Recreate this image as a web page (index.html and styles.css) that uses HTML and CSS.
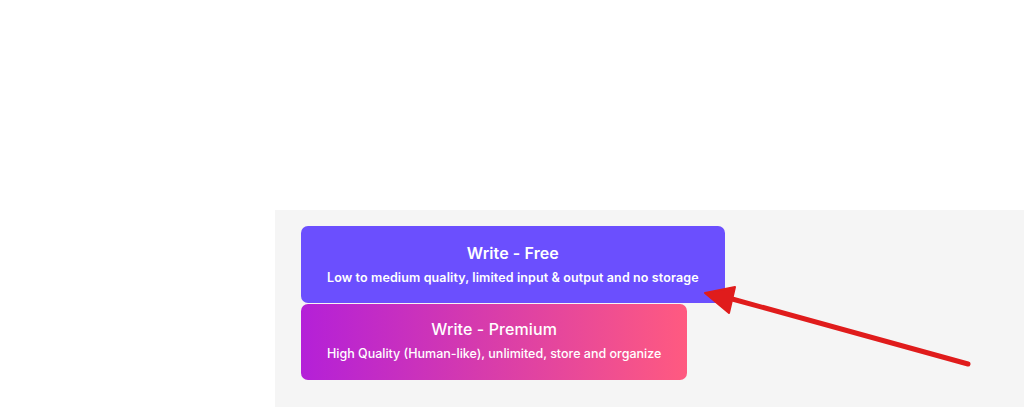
FILE: index.html
```html
<!DOCTYPE html>
<html lang="en">
<head>
<meta charset="utf-8">
<title>Write plans</title>
<link rel="stylesheet" href="styles.css">
</head>
<body>
<div class="page">
  <section class="panel">
    <div class="options">
      <button class="option option-free">
        <span class="option-title">Write - Free</span>
        <span class="option-desc">Low to medium quality, limited input &amp; output and no storage</span>
      </button>
      <button class="option option-premium">
        <span class="option-title">Write - Premium</span>
        <span class="option-desc">High Quality (Human-like), unlimited, store and organize</span>
      </button>
    </div>
  </section>
  <svg class="arrow" width="1024" height="407" viewBox="0 0 1024 407" aria-hidden="true">
    <line x1="968" y1="364" x2="725" y2="297" stroke="#e01c1c" stroke-width="5" stroke-linecap="round"/>
    <polygon points="705,293 735,287 729,313" fill="#e01c1c" stroke="#e01c1c" stroke-width="2" stroke-linejoin="round"/>
  </svg>
</div>
</body>
</html>
```

FILE: styles.css
```css
html, body {
  margin: 0;
  padding: 0;
  background: #ffffff;
  width: 1024px;
  height: 407px;
  overflow: hidden;
}

.page {
  position: relative;
  width: 1024px;
  height: 407px;
  padding-top: 210px;
  box-sizing: border-box;
}

.panel {
  margin-left: 275px;
  height: 197px;
  background: #f5f5f5;
  padding: 16px 0 0 26px;
  box-sizing: border-box;
}

.options {
  display: flex;
  flex-direction: column;
  align-items: flex-start;
  gap: 1px;
}

.option {
  display: flex;
  flex-direction: column;
  align-items: center;
  border: none;
  border-radius: 7px;
  padding: 16px 26px 0;
  color: #ffffff;
  font-family: "Inter", "Noto Sans", sans-serif;
  cursor: pointer;
  box-sizing: border-box;
}

.option-free {
  background: #6b4ffe;
  height: 77px;
}

.option-premium {
  background: linear-gradient(90deg, #b420d8 0%, #d53aae 45%, #ff5a80 100%);
  height: 76px;
  padding-top: 14px;
}

.option-title {
  font-size: 16px;
  line-height: 22px;
  font-weight: 600;
  margin-bottom: 5px;
  letter-spacing: 0.1px;
}

.option-premium .option-title {
  font-weight: 500;
}

.option-desc {
  font-size: 12.5px;
  line-height: 18px;
  font-weight: 600;
  letter-spacing: 0.12px;
}

.option-premium .option-desc {
  font-weight: 500;
  letter-spacing: 0;
}

.arrow {
  position: absolute;
  left: 0;
  top: 0;
  pointer-events: none;
}
```
